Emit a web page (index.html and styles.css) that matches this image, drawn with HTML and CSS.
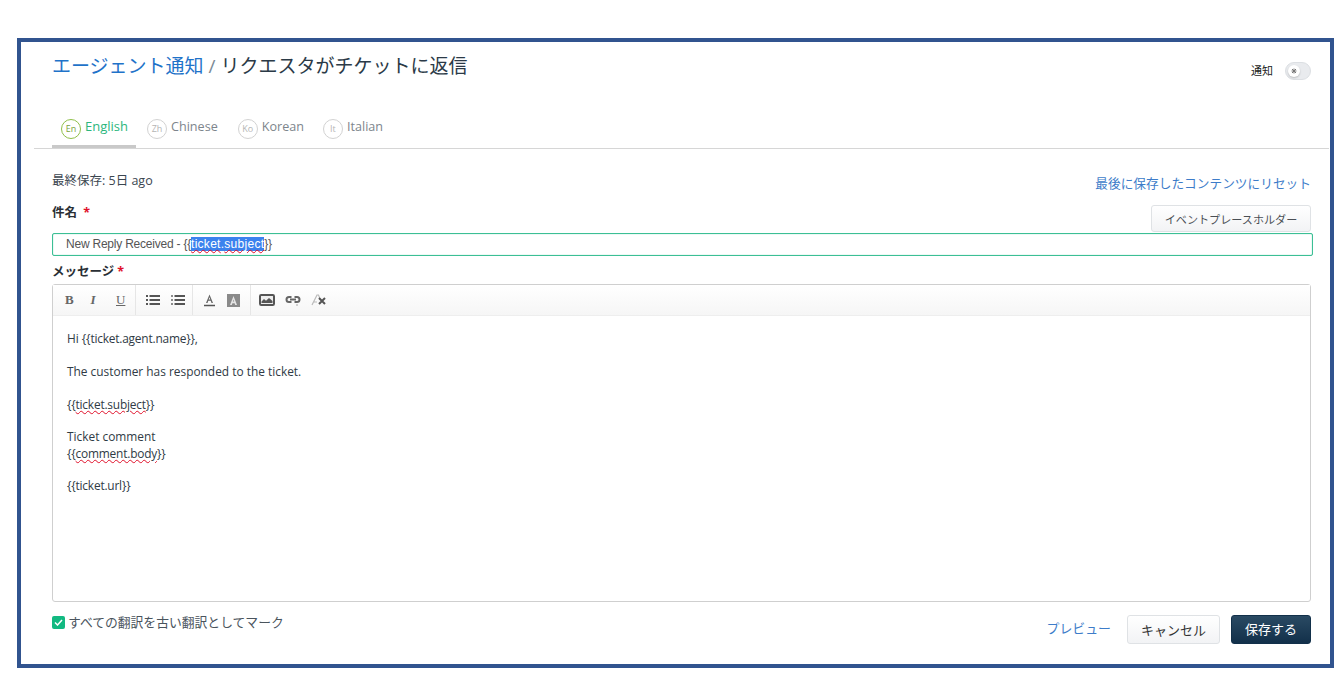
FILE: index.html
```html
<!DOCTYPE html>
<html lang="ja">
<head>
<meta charset="utf-8">
<title>エージェント通知</title>
<link rel="stylesheet" href="styles.css">
</head>
<body>
<main class="frame">
  <header class="page-head">
    <h1 class="title"><a class="crumb">エージェント通知</a> <span class="slash">/</span> <span>リクエスタがチケットに返信</span></h1>
    <div class="notify">
      <span class="notify-label">通知</span>
      <span class="toggle"><span class="knob"><svg width="6" height="6" viewBox="0 0 6 6"><path d="M1 1l4 4M5 1L1 5M3 .5v5M.5 3h5" stroke="#777" stroke-width="1" fill="none"/></svg></span></span>
    </div>
  </header>
  <nav class="tabs">
    <a class="tab tab-on"><span class="badge badge-on">En</span><span class="tab-name">English</span></a>
    <a class="tab"><span class="badge">Zh</span><span class="tab-name">Chinese</span></a>
    <a class="tab"><span class="badge">Ko</span><span class="tab-name">Korean</span></a>
    <a class="tab"><span class="badge">It</span><span class="tab-name">Italian</span></a>
  </nav>
  <section class="form">
    <div class="meta">
      <div class="meta-left">
        <div class="saved">最終保存: 5日 ago</div>
        <label class="field-label subject-label">件名 <span class="req">*</span></label>
      </div>
      <div class="meta-right">
        <a class="reset">最後に保存したコンテンツにリセット</a>
        <button class="btn btn-ph">イベントプレースホルダー</button>
      </div>
    </div>
    <div class="subject-input">New Reply Received - {{<span class="sel"><span class="wavy">ticket</span>.<span class="wavy">subject</span></span>}}</div>
    <label class="field-label msg-label">メッセージ<span class="req">*</span></label>
    <div class="editor">
      <div class="toolbar">
        <div class="tool-group tg1">
          <span class="tool glyph g-b">B</span>
          <span class="tool glyph g-i">I</span>
          <span class="tool glyph g-u">U</span>
        </div>
        <div class="tool-group tg2">
          <svg class="tool" width="14" height="10" viewBox="0 0 14 10"><path d="M0 1h2M3.500 1H14M0 5h2M3.500 5H14M0 9h2M3.500 9H14" stroke="#555" stroke-width="2"/></svg>
          <svg class="tool" width="14" height="10" viewBox="0 0 14 10"><path d="M0 1h2M0 5h2M0 9h2" stroke="#666" stroke-width="1.400"/><path d="M3.500 1H14M3.500 5H14M3.500 9H14" stroke="#555" stroke-width="2"/></svg>
        </div>
        <div class="tool-group tg3">
          <svg class="tool" width="11" height="13" viewBox="0 0 11 13"><path d="M5.500 .5L2 9h1.500l.8-2.200h2.400L7.500 9H9L5.500 .5zM4.700 5.600l.8-2.400.8 2.400z" fill="#666"/><path d="M0 11.500h11" stroke="#555" stroke-width="1.500"/></svg>
          <svg class="tool" width="13" height="13" viewBox="0 0 13 13"><rect width="13" height="13" fill="#8a8a8a"/><path d="M6.500 2L3 11h1.800l.6-1.800h2.200l.6 1.800H10zM5.900 7.600l.6-2 .6 2z" fill="#e4e4e4" fill-rule="evenodd"/></svg>
        </div>
        <div class="tool-group tg4">
          <svg class="tool" width="16" height="12" viewBox="0 0 16 12"><rect x="1" y="1" width="14" height="10" rx="1.200" fill="#eee" stroke="#555" stroke-width="2"/><path d="M2.500 9V7.500L5 5l2 1.800L10 4l3.500 3V9z" fill="#555"/></svg>
          <svg class="tool" width="16" height="12" viewBox="0 0 16 12"><path d="M6.500 3H4a2.500 2.500 0 0 0 0 5h2.500M9.500 3H12a2.500 2.500 0 0 1 0 5H9.500M5 5.500h6" stroke="#666" stroke-width="2" fill="none"/><circle cx="12" cy="11" r=".7" fill="#888"/></svg>
          <svg class="tool" width="16" height="12" viewBox="0 0 16 12"><path d="M1 11L6 1h1.500l2 5M3 8h3" stroke="#bbb" stroke-width="1.200" fill="none"/><path d="M8 4l6 6M14 4l-6 6" stroke="#555" stroke-width="2"/></svg>
        </div>
      </div>
      <div class="doc">
        <p>Hi <span class="tpl">{{ticket.agent.name}},</span></p>
        <p>The customer has responded to the ticket.</p>
        <p class="tpl">{{<span class="wavy">ticket.subject</span>}}</p>
        <p>Ticket comment<br><span class="tpl">{{<span class="wavy">comment.body</span>}}</span></p>
        <p class="tpl">{{ticket.url}}</p>
      </div>
    </div>
    <footer class="foot">
      <label class="check"><span class="box"><svg width="9" height="7" viewBox="0 0 9 7"><path d="M1 3.500L3.500 6 8 1" stroke="#fff" stroke-width="1.500" fill="none"/></svg></span>すべての翻訳を古い翻訳としてマーク</label>
      <div class="actions">
        <a class="preview">プレビュー</a>
        <button class="btn btn-cancel">キャンセル</button>
        <button class="btn btn-save">保存する</button>
      </div>
    </footer>
  </section>
</main>
</body>
</html>
```

FILE: styles.css
```css
* { box-sizing: border-box; }
html, body { margin: 0; padding: 0; background: #fff; }
body {
  padding: 38px 0 0 17px;
  font-family: "Open Sans", "Noto Sans CJK JP", sans-serif;
  color: #2f3b45;
  height: 679px;
  overflow: hidden;
}
a { text-decoration: none; }
.frame {
  width: 1317px;
  height: 630px;
  border: 4px solid #31548f;
  background: #fff;
}
.page-head {
  height: 68px;
  padding: 11px 19px 0 31px;
  display: flex;
  justify-content: space-between;
  align-items: flex-start;
}
.title {
  margin: 0;
  font-size: 19px;
  font-weight: 400;
  line-height: 26px;
  color: #2b3a47;
  white-space: nowrap;
}
.crumb { color: #1f73c9; }
.slash { color: #7b8a96; }
.notify {
  display: flex;
  align-items: center;
  gap: 12px;
  margin-top: 9px;
}
.notify-label { font-size: 11px; color: #222; line-height: 16px; margin-top: -1px; }
.toggle {
  width: 26px;
  height: 18px;
  border-radius: 9px;
  background: #e9ebee;
  border: 1px solid #dcdfe3;
  display: flex;
  align-items: center;
  padding-left: 2px;
}
.knob {
  width: 12px;
  height: 12px;
  border-radius: 50%;
  background: #fff;
  display: flex;
  align-items: center;
  justify-content: center;
  box-shadow: 0 1px 2px rgba(0,0,0,.2);
}
.tabs {
  margin-left: 13px;
  margin-right: 1px;
  height: 39px;
  border-bottom: 1px solid #d6d6d6;
  padding-left: 18px;
  display: flex;
  gap: 2px;
}
.tab {
  height: 38px;
  display: flex;
  align-items: flex-start;
  padding: 9px 9px 0;
  color: #7d858c;
  font-size: 12.600px;
  line-height: 18px;
  gap: 4px;
}
.tab:nth-child(3) { margin-right: -1px; }
.tab-on {
  width: 84px;
  color: #2cb67d;
  font-size: 13px;
  line-height: 16px;
  border-bottom: 3px solid #c9c9c9;
}
.badge {
  width: 20px;
  height: 20px;
  border-radius: 50%;
  border: 1px solid #d2d2d2;
  color: #b5b5b5;
  font-size: 9px;
  line-height: 18px;
  text-align: center;
  flex: none;
}
.badge-on { border-color: #8fbf4a; color: #7aa33c; }
.tab-name { margin-top: -1px; }
.form { padding: 0 19px 0 31px; }
.meta {
  height: 83px;
  display: flex;
  justify-content: space-between;
}
.meta-left { padding-top: 23px; }
.saved { font-size: 12.500px; line-height: 18px; color: #3b4650; }
.field-label {
  display: block;
  font-size: 12.500px;
  font-weight: 600;
  line-height: 18px;
  color: #2a2f35;
}
.subject-label { margin-top: 14px; }
.req { color: #e0102a; font-weight: 700; margin-left: 3px; }
.meta-right {
  padding-top: 25px;
  display: flex;
  flex-direction: column;
  align-items: flex-end;
}
.reset { font-size: 12.700px; line-height: 18px; color: #3d7cc9; white-space: nowrap; }
.btn {
  font-family: inherit;
  border-radius: 3px;
  cursor: pointer;
  white-space: nowrap;
}
.btn-ph {
  margin-top: 13px;
  width: 160px;
  height: 27px;
  padding: 0;
  font-size: 11.100px;
  color: #4a4f55;
  background: linear-gradient(#fff, #f2f3f5);
  border: 1px solid #dfe2e5;
}
.subject-input {
  margin: 1px -2px 0 0;
  height: 23px;
  border: 1px solid #3cbf95;
  box-shadow: inset 0 0 1px #3cbf95;
  border-radius: 2px;
  padding-left: 13px;
  font-family: "Liberation Sans", sans-serif;
  font-size: 12px;
  letter-spacing: -.22px;
  line-height: 21px;
  color: #555;
}
.sel { background: #3b82ee; color: #fff; letter-spacing: .28px; }
.wavy { text-decoration: underline wavy #e0102a 1px; }
.msg-label { margin-top: 7px; }
.editor {
  margin-top: 3px;
  height: 318px;
  border: 1px solid #cfcfcf;
  border-radius: 3px;
}
.toolbar {
  height: 31px;
  display: flex;
  background: linear-gradient(#fff, #f6f6f6);
  border-bottom: 1px solid #eee;
}
.tool-group {
  display: flex;
  align-items: center;
  border-right: 1px solid #e6e6e6;
  padding-left: 12px;
}
.tg1 { width: 83px; padding-left: 12px; }
.tg2 { width: 57px; gap: 11px; padding-left: 10px; }
.tg3 { width: 58px; gap: 12px; padding-left: 11px; }
.tg4 { border-right: 0; gap: 10px; padding-left: 8px; }
.tool { flex: none; }
.glyph {
  width: 25.500px;
  font-family: "Liberation Serif", serif;
  font-size: 13px;
  font-weight: 700;
  color: #666;
  text-align: left;
}
.g-i { font-style: italic; }
.g-u { text-decoration: underline; font-weight: 400; }
.doc {
  padding: 14.300px 14px 0;
  font-size: 11.900px;
  line-height: 16.330px;
  color: #2f3b45;
}
.doc p { margin: 0 0 16.330px; }
.tpl { letter-spacing: -.2px; }
.foot {
  margin-top: 13px;
  height: 29px;
  display: flex;
  justify-content: space-between;
  align-items: flex-start;
}
.check {
  display: flex;
  align-items: center;
  gap: 3px;
  font-size: 12.800px;
  line-height: 14px;
  color: #4a545d;
}
.box {
  width: 13px;
  height: 13px;
  border-radius: 2px;
  background: #12b981;
  display: flex;
  align-items: center;
  justify-content: center;
}
.actions { display: flex; align-items: flex-start; }
.preview {
  font-size: 12.900px;
  line-height: 26px;
  color: #3d7cc9;
  margin-right: 16px;
}
.btn-cancel {
  width: 93px;
  height: 29px;
  padding: 0 0 1px;
  font-size: 13px;
  color: #333;
  background: linear-gradient(#fff, #f2f3f5);
  border: 1px solid #dfe2e5;
}
.btn-save {
  width: 80px;
  height: 29px;
  margin-left: 11px;
  padding: 0 0 3px;
  font-size: 13px;
  color: #fff;
  background: linear-gradient(#2a4a63, #12304a);
  border: 1px solid #12304a;
}
```
